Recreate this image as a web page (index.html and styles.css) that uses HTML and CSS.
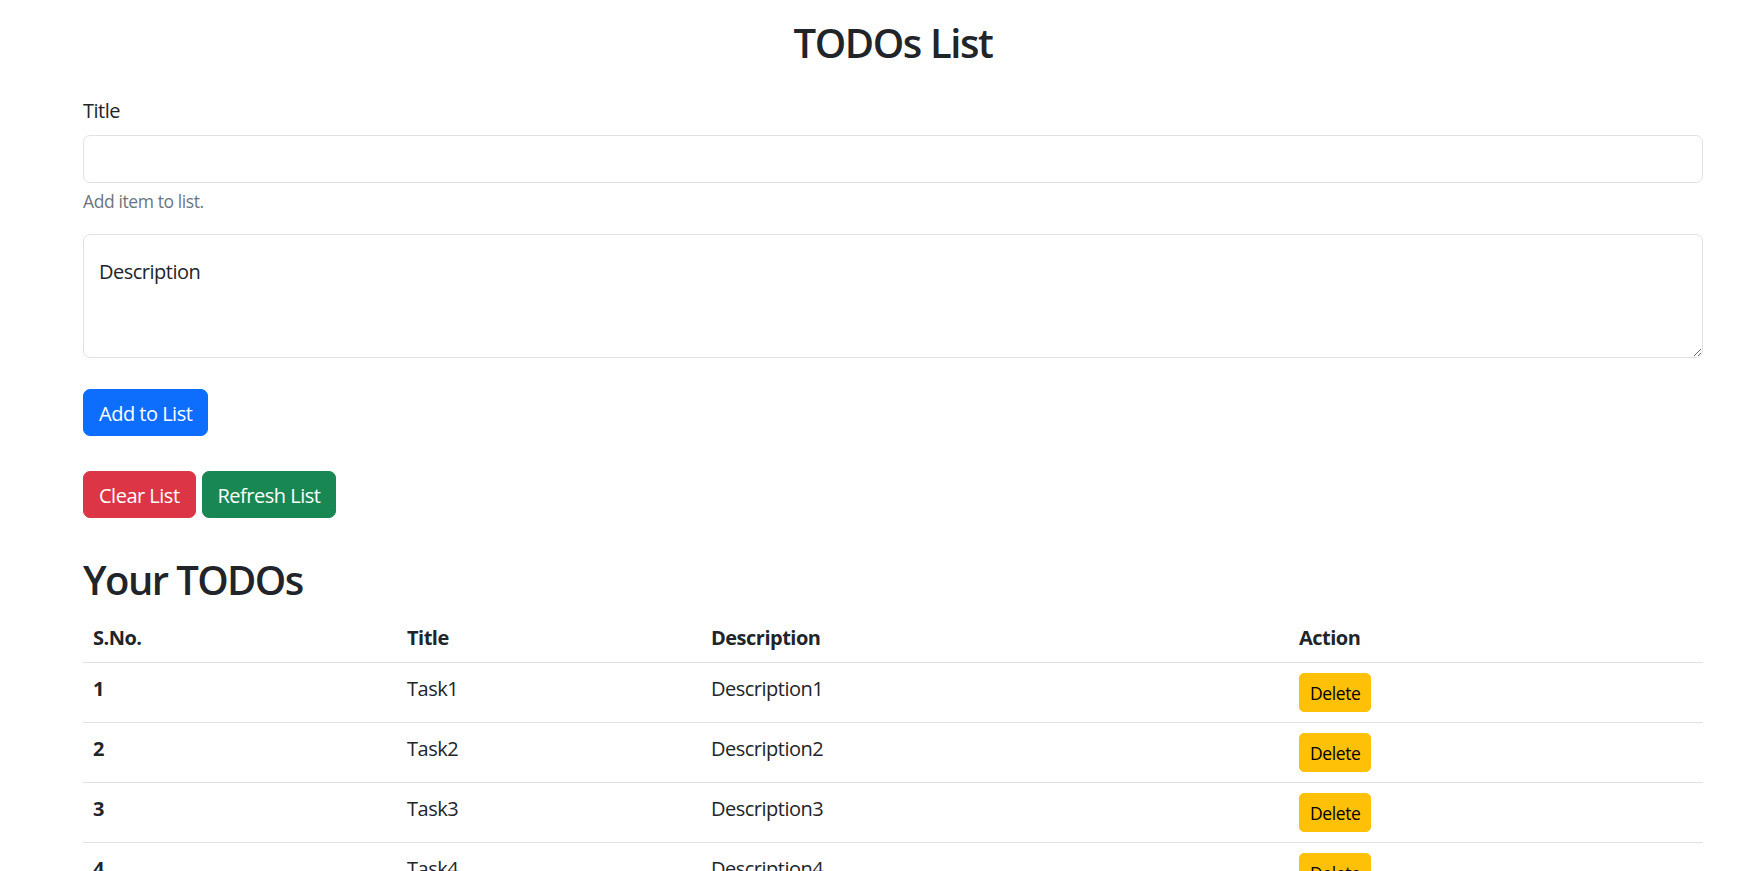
FILE: index.html
```html
<!DOCTYPE html>
<html lang="en">
<head>
<meta charset="utf-8">
<title>TODOs List</title>
<link rel="stylesheet" href="styles.css">
</head>
<body>
<div class="container">
  <h1 class="page-title">TODOs List</h1>
  <form class="todo-form">
    <div class="field">
      <label class="field-label" for="title">Title</label>
      <input class="field-input" id="title" type="text">
      <div class="field-help">Add item to list.</div>
    </div>
    <div class="field-floating">
      <textarea class="field-textarea" id="desc" placeholder="Description"></textarea>
    </div>
    <div class="form-actions">
      <button type="button" class="btn btn-primary">Add to List</button>
    </div>
  </form>
  <div class="list-actions">
    <button type="button" class="btn btn-danger">Clear List</button>
    <button type="button" class="btn btn-success">Refresh List</button>
  </div>
  <h2 class="section-title">Your TODOs</h2>
  <table class="todo-table">
    <thead>
      <tr>
        <th class="col-no">S.No.</th>
        <th class="col-title">Title</th>
        <th class="col-desc">Description</th>
        <th class="col-action">Action</th>
      </tr>
    </thead>
    <tbody>
      <tr>
        <th>1</th>
        <td>Task1</td>
        <td>Description1</td>
        <td class="cell-action"><button type="button" class="btn-sm btn-warning">Delete</button></td>
      </tr>
      <tr>
        <th>2</th>
        <td>Task2</td>
        <td>Description2</td>
        <td class="cell-action"><button type="button" class="btn-sm btn-warning">Delete</button></td>
      </tr>
      <tr>
        <th>3</th>
        <td>Task3</td>
        <td>Description3</td>
        <td class="cell-action"><button type="button" class="btn-sm btn-warning">Delete</button></td>
      </tr>
      <tr>
        <th>4</th>
        <td>Task4</td>
        <td>Description4</td>
        <td class="cell-action"><button type="button" class="btn-sm btn-warning">Delete</button></td>
      </tr>
    </tbody>
  </table>
</div>
</body>
</html>
```

FILE: styles.css
```css
* {
  box-sizing: border-box;
}

html, body {
  margin: 0;
  height: 100%;
  overflow: hidden;
  background: #fff;
}

body {
  font-family: "Open Sans", "Noto Sans", "Liberation Sans", sans-serif;
  font-size: 20px;
  line-height: 30px;
  letter-spacing: -0.5px;
  color: #212529;
}

.container {
  width: 1620px;
  margin-left: 83px;
  padding-top: 19px;
}

.page-title {
  margin: 0;
  font-size: 40px;
  line-height: 48px;
  font-weight: 600;
  text-align: center;
  letter-spacing: -1.4px;
}

.todo-form {
  margin-top: 28px;
}

.field {
  margin-bottom: 20px;
}

.field-label {
  display: block;
  padding-top: 1px;
  margin-bottom: 9px;
}

.field-input {
  display: block;
  width: 100%;
  height: 48px;
  padding: 7px 15px;
  font: inherit;
  letter-spacing: inherit;
  color: #212529;
  border: 1px solid #dee2e6;
  border-radius: 7px;
  background: #fff;
  outline: none;
}

.field-help {
  margin-top: 5px;
  padding-top: 1px;
  font-size: 17.5px;
  line-height: 25px;
  letter-spacing: -0.4px;
  color: #6c757d;
}

.field-floating {
  margin-bottom: 31px;
}

.field-textarea {
  display: block;
  width: 100%;
  height: 124px;
  padding: 22px 15px 20px;
  font: inherit;
  letter-spacing: inherit;
  color: #212529;
  border: 1px solid #dee2e6;
  border-radius: 7px;
  background: #fff;
  resize: vertical;
  outline: none;
}

.field-textarea::placeholder {
  color: #212529;
  opacity: 1;
}

.btn {
  display: inline-block;
  padding: 8.5px 15px 6.5px;
  font: inherit;
  letter-spacing: inherit;
  line-height: 30px;
  border: 1px solid transparent;
  border-radius: 7px;
  color: #fff;
  cursor: pointer;
}

.btn-primary {
  background: #0d6efd;
  border-color: #0d6efd;
}

.btn-danger {
  background: #dc3545;
  border-color: #dc3545;
}

.btn-success {
  background: #198754;
  border-color: #198754;
}

.list-actions {
  display: flex;
  gap: 6px;
  margin-top: 35px;
}

.section-title {
  margin: 38px 0 8px;
  font-size: 40px;
  line-height: 48px;
  font-weight: 600;
  letter-spacing: -1.6px;
}

.todo-table {
  width: 100%;
  border-collapse: collapse;
  table-layout: fixed;
}

.todo-table th,
.todo-table td {
  padding: 11px 10px 9px;
  text-align: left;
  vertical-align: top;
  border-bottom: 1px solid #dee2e6;
}

.todo-table th {
  font-weight: 700;
}

.todo-table td {
  font-weight: 400;
}

.todo-table .cell-action {
  padding: 10px;
}

.col-no { width: 314px; }
.col-title { width: 304px; }
.col-desc { width: 588px; }
.col-action { width: 414px; }

.btn-sm {
  display: inline-block;
  padding: 5.5px 10px 4.5px;
  font: inherit;
  font-size: 17.5px;
  line-height: 27px;
  letter-spacing: -0.4px;
  border: 1px solid transparent;
  border-radius: 5px;
  cursor: pointer;
}

.btn-warning {
  background: #ffc107;
  border-color: #ffc107;
  color: #000;
}
```
